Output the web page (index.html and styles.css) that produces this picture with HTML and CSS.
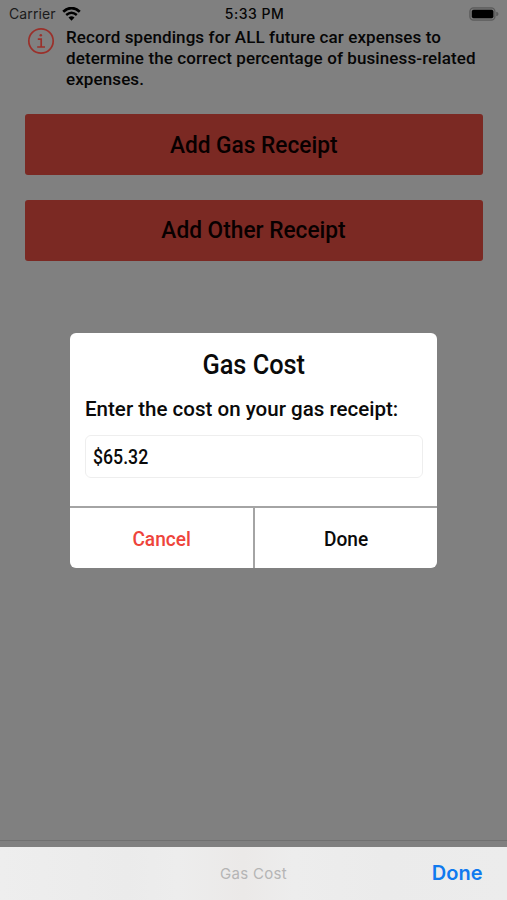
FILE: index.html
```html
<!DOCTYPE html>
<html lang="en">
<head>
<meta charset="utf-8">
<title>Gas Cost</title>
<link rel="stylesheet" href="styles.css">
</head>
<body>
<div class="phone">
  <header class="status">
    <div class="carrier"><span class="carrier-name">Carrier</span>
      <svg class="wifi" width="19" height="14" viewBox="0 0 19 14"><path d="M1.2 4.7Q9.5-2.4 17.8 4.7" fill="none" stroke="#000" stroke-width="2.8"/><path d="M4.2 8Q9.5 3.6 14.8 8" fill="none" stroke="#000" stroke-width="2.5"/><path d="M6.5 10.6Q9.5 8 12.5 10.6L9.5 13.7Z"/></svg>
    </div>
    <span class="clock">5:33 PM</span>
    <svg class="battery" width="31" height="14" viewBox="0 0 31 14"><rect x=".9" y=".9" width="25" height="12.2" rx="3.6" fill="#777" stroke="#5b5b5b" stroke-width="1.3"/><rect x="2.8" y="2.7" width="21.6" height="8.6" rx="1.8"/><path d="M27.2 4.7Q29.5 5.3 29.5 7T27.2 9.3Z" fill="#5b5b5b"/></svg>
  </header>
  <main>
    <section class="notice">
      <svg class="info" width="28" height="28" viewBox="0 0 28 28" fill="none" stroke="#9a302a" stroke-width="1.7"><circle cx="14" cy="14" r="12.2"/><path d="M10.8 12.2H14.2V19.8M10.2 20H18"/><circle cx="13.8" cy="8.3" r="1.3" fill="#9a302a" stroke="none"/></svg>
      <p>Record spendings for ALL future car expenses to<br>determine the correct percentage of business-related<br>expenses.</p>
    </section>
    <button class="action"><span>Add Gas Receipt</span></button>
    <button class="action"><span>Add Other Receipt</span></button>
    <div class="hairline"></div>
  </main>
  <div class="overlay">
    <section class="dialog">
      <h1><span>Gas Cost</span></h1>
      <label for="cost">Enter the cost on your gas receipt:</label>
      <div class="field" id="cost"><span>$65.32</span></div>
      <div class="choices"><button class="cancel"><span>Cancel</span></button><button class="done"><span>Done</span></button></div>
    </section>
  </div>
  <footer class="toolbar"><span></span><span class="caption">Gas Cost</span><span class="finish">Done</span></footer>
</div>
</body>
</html>
```
FILE: styles.css
```css
* { box-sizing: border-box; }
body { margin: 0; }
.phone {
  position: relative;
  width: 507px;
  height: 900px;
  display: flex;
  flex-direction: column;
  overflow: hidden;
  background: #808080;
  color: #060606;
  font-family: Roboto, sans-serif;
  font-weight: 500;
}
button { border: 0; padding: 0; background: none; font: inherit; color: inherit; }
.status {
  height: 27px;
  display: grid;
  grid-template-columns: 1fr auto 1fr;
  align-items: center;
  padding: 0 7px 0 9px;
  font-family: Inter, sans-serif;
}
.carrier { display: flex; align-items: center; gap: 6px; font-size: 14px; font-weight: 400; color: #1b1b1b; letter-spacing: .12px; }
.clock { font-size: 14px; font-weight: 500; letter-spacing: .5px; }
.battery { justify-self: end; }
main { flex: 1; display: flex; flex-direction: column; padding: 0 25px; }
.notice { flex: none; display: flex; height: 87px; gap: 11px; padding-left: 2px; }
.notice p { margin: 0; white-space: nowrap; font-size: 17px; line-height: 21.2px; letter-spacing: .1px; }
.info { flex: none; }
.action {
  flex: none;
  width: 457.5px;
  height: 61px;
  margin-bottom: 24.5px;
  border-radius: 3px;
  background: #7b2923;
  color: #080000;
  font-size: 24px;
}
.action span { display: inline-block; transform: scaleX(.945); }
.hairline { height: 1px; margin: auto -25px 5.5px; background: #707070; }
.overlay {
  position: absolute;
  inset: 0 0 53px;
  padding: 333px 0 0 70.4px;
}
.dialog {
  width: 367px;
  height: 235px;
  display: flex;
  flex-direction: column;
  border-radius: 6px;
  overflow: hidden;
  background: #fff;
  color: #0a0a0a;
}
.dialog h1 { margin: 16px 0 0; height: 32px; line-height: 32px; font-size: 28px; font-weight: 500; text-align: center; }
.dialog h1 span { display: inline-block; transform: scaleX(.905); }
.dialog label { margin: 15px 0 0 14.5px; height: 26px; line-height: 26px; font-size: 21px; white-space: nowrap; transform: scaleX(.978); transform-origin: left; }
.field {
  margin: 13px 14.5px 0;
  height: 43px;
  padding-left: 7.5px;
  border: 1px solid #eee;
  border-radius: 6px;
  font-size: 20px;
  line-height: 42px;
}
.field span { display: inline-block; transform: scaleX(.885); transform-origin: left; }
.choices { margin-top: auto; height: 62px; display: flex; border-top: 2px solid #a4a4a4; font-size: 20px; }
.choices button { flex: 1; padding-top: 1px; }
.choices span { display: inline-block; transform: scaleX(.955); }
.choices .cancel { border-right: 2px solid #a4a4a4; color: #ee443b; }
.toolbar {
  height: 53.5px;
  display: grid;
  grid-template-columns: 1fr auto 1fr;
  align-items: center;
  padding: 0 24.5px;
  background: linear-gradient(90deg, #eeeeee 0, #ebebeb 25%, #ededed 35%, #ebe9e8 48%, #ededed 58%, #ebebeb 76%, #ececec);
  font-family: Inter, sans-serif;
}
.caption { font-size: 15px; font-weight: 400; color: #b5b5b5; letter-spacing: .3px; }
.finish { justify-self: end; font-size: 20px; font-weight: 600; color: #107aef; }
```
